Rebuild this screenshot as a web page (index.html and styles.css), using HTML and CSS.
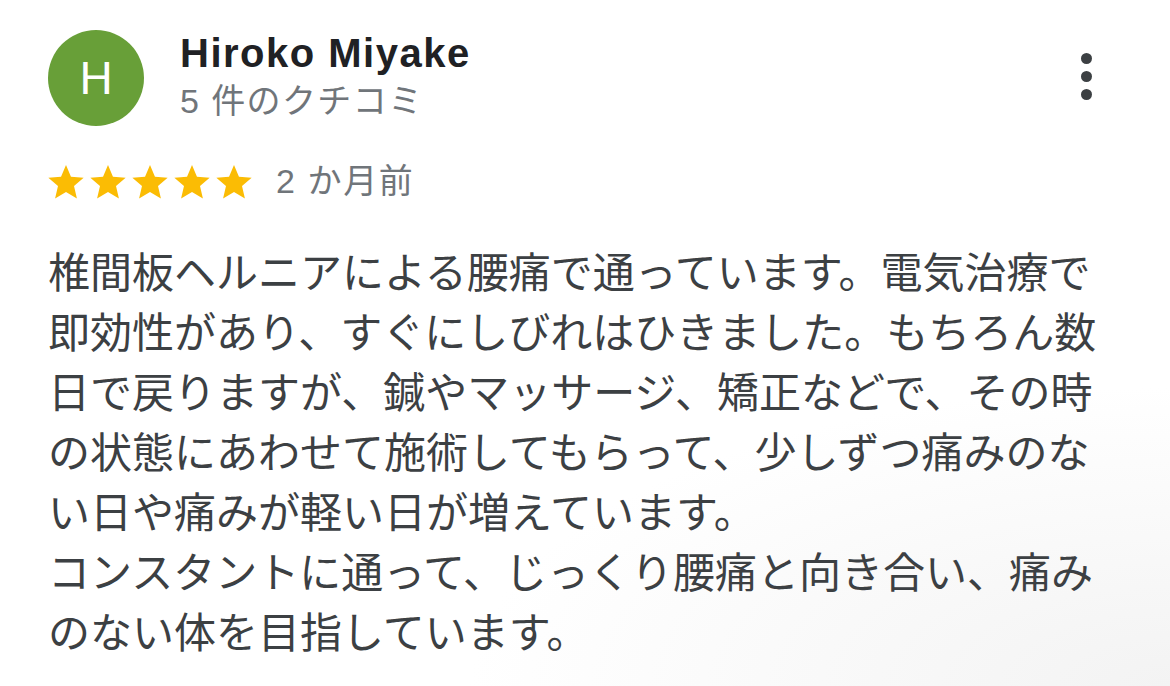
FILE: index.html
```html
<!DOCTYPE html>
<html lang="ja">
<head>
<meta charset="utf-8">
<title>Review</title>
<link rel="stylesheet" href="styles.css">
</head>
<body>
<div class="review">
  <div class="header">
    <div class="avatar">H</div>
    <div class="who">
      <div class="name">Hiroko Miyake</div>
      <div class="count">5 件のクチコミ</div>
    </div>
    <div class="menu" aria-label="menu">
      <span class="dot"></span><span class="dot"></span><span class="dot"></span>
    </div>
  </div>
  <div class="meta">
    <div class="stars">
      <svg viewBox="2 2 20 19.27"><path d="M12 17.27L18.18 21l-1.64-7.03L22 9.24l-7.19-.61L12 2 9.19 8.63 2 9.24l5.46 4.73L5.82 21z"/></svg>
      <svg viewBox="2 2 20 19.27"><path d="M12 17.27L18.18 21l-1.64-7.03L22 9.24l-7.19-.61L12 2 9.19 8.63 2 9.24l5.46 4.73L5.82 21z"/></svg>
      <svg viewBox="2 2 20 19.27"><path d="M12 17.27L18.18 21l-1.64-7.03L22 9.24l-7.19-.61L12 2 9.19 8.63 2 9.24l5.46 4.73L5.82 21z"/></svg>
      <svg viewBox="2 2 20 19.27"><path d="M12 17.27L18.18 21l-1.64-7.03L22 9.24l-7.19-.61L12 2 9.19 8.63 2 9.24l5.46 4.73L5.82 21z"/></svg>
      <svg viewBox="2 2 20 19.27"><path d="M12 17.27L18.18 21l-1.64-7.03L22 9.24l-7.19-.61L12 2 9.19 8.63 2 9.24l5.46 4.73L5.82 21z"/></svg>
    </div>
    <div class="date">2 か月前</div>
  </div>
  <p class="text">椎間板ヘルニアによる腰痛で通っています。電気治療で即効性があり、すぐにしびれはひきました。もちろん数日で戻りますが、鍼やマッサージ、矯正などで、その時の状態にあわせて施術してもらって、少しずつ痛みのない日や痛みが軽い日が増えています。<br>コンスタントに通って、じっくり腰痛と向き合い、痛みのない体を目指しています。</p>
</div>
</body>
</html>
```

FILE: styles.css
```css
html, body {
  margin: 0;
  padding: 0;
}
body {
  width: 1170px;
  height: 686px;
  overflow: hidden;
  background: radial-gradient(ellipse 700px 300px at 1170px 686px, #f3f3f3 0%, #ffffff 100%);
  font-family: "Noto Sans CJK JP", "Noto Sans", sans-serif;
}
.review {
  padding: 30px 0 0 48px;
}
.header {
  display: flex;
  align-items: flex-start;
}
.avatar {
  width: 96px;
  height: 96px;
  border-radius: 50%;
  background: #689f38;
  color: #ffffff;
  font-family: "Liberation Sans", Arial, sans-serif;
  font-size: 46px;
  display: flex;
  align-items: center;
  justify-content: center;
  flex-shrink: 0;
}
.who {
  margin-left: 36px;
  margin-top: 1px;
  display: flex;
  flex-direction: column;
}
.name {
  font-family: "Liberation Sans", Arial, sans-serif;
  font-weight: bold;
  font-size: 40px;
  line-height: 44px;
  color: #202124;
  letter-spacing: 1.5px;
}
.count {
  margin-top: 6px;
  font-family: "Liberation Sans", "Noto Sans CJK JP", sans-serif;
  font-size: 34px;
  line-height: 40px;
  color: #70757a;
  letter-spacing: 1.4px;
}
.menu {
  margin-left: auto;
  margin-right: 72px;
  margin-top: 23px;
  width: 24px;
  display: flex;
  flex-direction: column;
  align-items: center;
  gap: 7px;
}
.dot {
  width: 11px;
  height: 11px;
  border-radius: 50%;
  background: #3c4043;
}
.meta {
  display: flex;
  align-items: center;
  margin-top: 37px;
  height: 36px;
}
.stars {
  display: flex;
  gap: 6px;
  padding-top: 1px;
}
.stars svg {
  width: 36px;
  height: 34px;
  fill: #fbbc04;
  display: block;
}
.date {
  margin-left: 24px;
  font-family: "Liberation Sans", "Noto Sans CJK JP", sans-serif;
  font-size: 34px;
  line-height: 36px;
  color: #70757a;
  letter-spacing: 1.6px;
}
.text {
  margin: 41px 0 0 0;
  width: 1062px;
  font-size: 42px;
  line-height: 60px;
  color: #3c4043;
}
```
